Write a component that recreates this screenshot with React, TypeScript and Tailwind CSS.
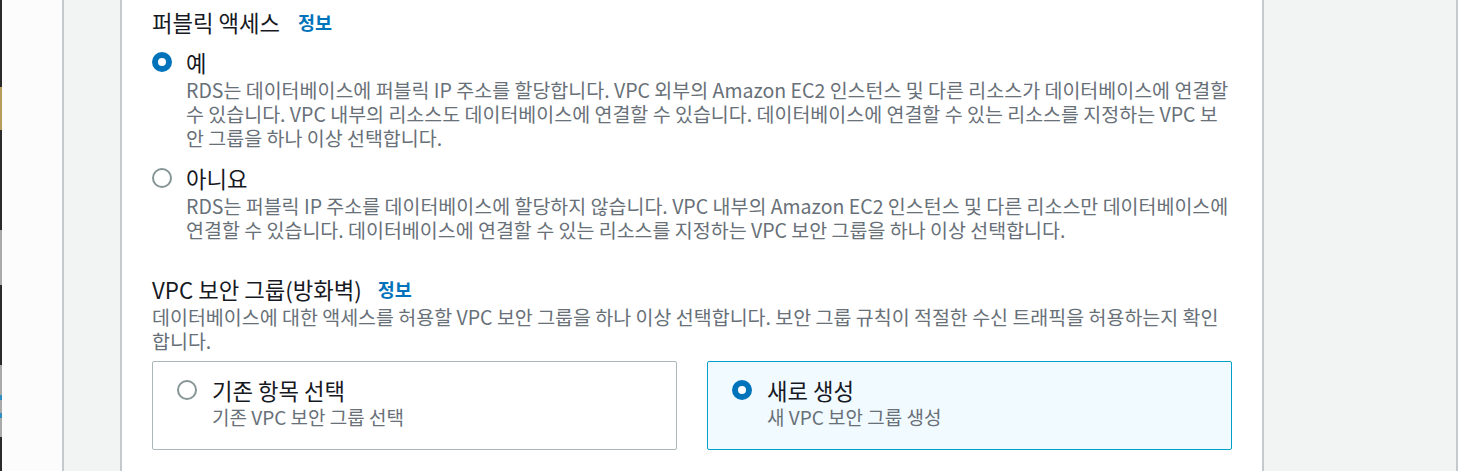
const font = { fontFamily: '"Noto Sans CJK KR", "Noto Sans", sans-serif' };

function Radio({ checked }: { checked: boolean }) {
  return checked ? (
    <span className="box-border block h-5 w-5 shrink-0 rounded-full border-[6px] border-[#0073bb] bg-white" />
  ) : (
    <span className="box-border block h-5 w-5 shrink-0 rounded-full border-2 border-[#879596] bg-white" />
  );
}

function Info() {
  return <span className="text-[18.5px] font-bold leading-7 text-[#0073bb]">정보</span>;
}

function Option({ checked, label, children }: { checked: boolean; label: string; children: React.ReactNode }) {
  return (
    <div>
      <div className="flex items-center gap-[14px]">
        <Radio checked={checked} />
        <span className="text-[22.3px] leading-7 text-[#16191f]">{label}</span>
      </div>
      <p className="ml-[34px] mt-[2px] text-[19.5px] leading-6 text-[#687078]">{children}</p>
    </div>
  );
}

function Card({ checked, label, sub }: { checked: boolean; label: string; sub: string }) {
  return (
    <div
      className={
        checked
          ? 'h-[89px] rounded-[2px] border border-[#00a1c9] bg-[#f1faff] pl-[24px] pt-[13px]'
          : 'h-[89px] rounded-[2px] border border-[#aab7b8] bg-white pl-[24px] pt-[13px]'
      }
    >
      <div className="flex items-center gap-[15px]">
        <Radio checked={checked} />
        <span className="text-[22.3px] leading-[30px] text-[#16191f]">{label}</span>
      </div>
      <p className="ml-[35px] text-[19px] leading-6 text-[#687078]">{sub}</p>
    </div>
  );
}

export default function App() {
  return (
    <div className="flex h-[471px] w-[1458px] overflow-hidden bg-white" style={font}>
      {/* left edge of another window */}
      <div className="flex w-[2px] flex-col">
        <div className="h-[87px] bg-[#2b2b2b]" />
        <div className="h-[43px] bg-[#b89c5c]" />
        <div className="h-[100px] bg-[#2b2b2b]" />
        <div className="h-[55px] bg-[#a9a9a9]" />
        <div className="h-[80px] bg-[#2b2b2b]" />
        <div className="h-[30px] bg-[#a9a9a9]" />
        <div className="h-[5px] bg-[#2e8fc0]" />
        <div className="h-[13px] bg-[#a9a9a9]" />
        <div className="h-[5px] bg-[#2e8fc0]" />
        <div className="h-[19px] bg-[#a9a9a9]" />
        <div className="flex-1 bg-[#2b2b2b]" />
      </div>
      <div className="w-[60px] bg-[#fcfcfc]" />
      <div className="w-[60px] border-x-2 border-[#c6c9cb] bg-[#f2f3f3]" />

      <main className="w-[1140px] px-[30px] pt-[8px]">
        <div className="flex items-center gap-[18px]">
          <h2 className="text-[22.3px] leading-7 text-[#16191f]">퍼블릭 액세스</h2>
          <Info />
        </div>

        <div className="mt-[12px]">
          <Option checked label="예">
            RDS는 데이터베이스에 퍼블릭 IP 주소를 할당합니다. VPC 외부의 Amazon EC2 인스턴스 및 다른 리소스가 데이터베이스에 연결할 수 있습니다. VPC 내부의 리소스도 데이터베이스에 연결할 수 있습니다. 데이터베이스에 연결할 수 있는 리소스를 지정하는 VPC 보안 그룹을 하나 이상 선택합니다.
          </Option>
        </div>
        <div className="mt-[14px]">
          <Option checked={false} label="아니요">
            RDS는 퍼블릭 IP 주소를 데이터베이스에 할당하지 않습니다. VPC 내부의 Amazon EC2 인스턴스 및 다른 리소스만 데이터베이스에 연결할 수 있습니다. 데이터베이스에 연결할 수 있는 리소스를 지정하는 VPC 보안 그룹을 하나 이상 선택합니다.
          </Option>
        </div>

        <div className="mt-[33px] flex items-center gap-[16px]">
          <h2 className="text-[22.3px] leading-7 text-[#16191f]">VPC 보안 그룹(방화벽)</h2>
          <Info />
        </div>
        <p className="mt-[2px] text-[19.5px] leading-6 text-[#687078]">
          데이터베이스에 대한 액세스를 허용할 VPC 보안 그룹을 하나 이상 선택합니다. 보안 그룹 규칙이 적절한 수신 트래픽을 허용하는지 확인합니다.
        </p>

        <div className="mt-[8px] grid grid-cols-2 gap-[30px]">
          <Card checked={false} label="기존 항목 선택" sub="기존 VPC 보안 그룹 선택" />
          <Card checked label="새로 생성" sub="새 VPC 보안 그룹 생성" />
        </div>
      </main>

      <div className="flex-1 border-x-2 border-[#c6c9cb] bg-[#f2f3f3]" />
    </div>
  );
}
